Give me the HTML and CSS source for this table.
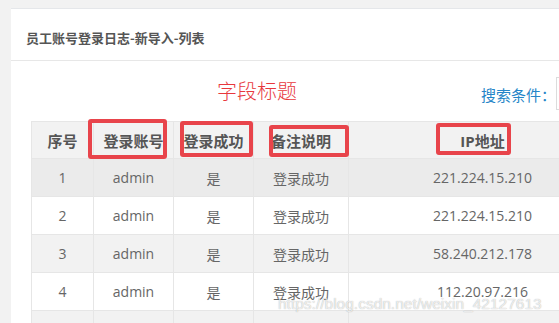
FILE: index.html
```html
<!DOCTYPE html>
<html lang="zh-CN">
<head>
<meta charset="utf-8">
<title>员工账号登录日志-新导入-列表</title>
<link rel="stylesheet" href="styles.css">
</head>
<body>
<div class="page">
  <div class="panel">
    <div class="panel-head">员工账号登录日志-新导入-列表</div>
    <div class="panel-body">
      <div class="toolbar">
        <span class="note">字段标题</span>
        <span class="search-label">搜索条件：</span>
        <span class="search-input"></span>
      </div>
      <table class="grid">
        <colgroup>
          <col class="c1"><col class="c2"><col class="c3"><col class="c4"><col class="c5">
        </colgroup>
        <thead>
          <tr><th>序号</th><th>登录账号</th><th>登录成功</th><th>备注说明</th><th>IP地址</th></tr>
        </thead>
        <tbody>
          <tr class="hover"><td>1</td><td>admin</td><td>是</td><td>登录成功</td><td>221.224.15.210</td></tr>
          <tr><td>2</td><td>admin</td><td>是</td><td>登录成功</td><td>221.224.15.210</td></tr>
          <tr class="odd"><td>3</td><td>admin</td><td>是</td><td>登录成功</td><td>58.240.212.178</td></tr>
          <tr><td>4</td><td>admin</td><td>是</td><td>登录成功</td><td>112.20.97.216</td></tr>
          <tr class="odd"><td>5</td><td>admin</td><td>是</td><td>登录成功</td><td>112.20.97.216</td></tr>
        </tbody>
      </table>
    </div>
  </div>
</div>
<div class="mark m1"></div>
<div class="mark m2"></div>
<div class="mark m3"></div>
<div class="mark m4"></div>
<div class="watermark">https://blog.csdn.net/weixin_42127613</div>
</body>
</html>
```
FILE: styles.css
```css
html, body {
  margin: 0;
  padding: 0;
}
body {
  background: #f2f2f2;
  width: 559px;
  height: 323px;
  overflow: hidden;
  position: relative;
  font-family: "Open Sans", "Noto Sans CJK SC", sans-serif;
}
.page {
  padding: 8px 0 0 11px;
}
.panel {
  background: #fff;
  border-top: 1px solid #e5e7ea;
  width: 760px;
}
.panel-head {
  height: 45px;
  padding: 6px 0 0 15px;
  border-bottom: 1px solid #e7e7e7;
  display: flex;
  align-items: center;
  font-size: 13px;
  font-weight: bold;
  color: #555;
  font-family: "Noto Sans CJK SC", sans-serif;
}
.panel-body {
  padding: 0 0 0 20px;
}
.toolbar {
  display: flex;
  align-items: center;
  height: 33px;
  padding: 16px 0 11px 0;
}
.note {
  margin-left: 186px;
  font-size: 20px;
  color: #e8383d;
  font-family: "Noto Sans CJK SC", sans-serif;
  font-weight: 300;
  position: relative;
  top: -3px;
}
.search-label {
  margin-left: 184px;
  font-size: 15px;
  color: #2585c8;
  font-family: "Noto Sans CJK SC", sans-serif;
  position: relative;
  top: 1px;
}
.search-input {
  margin-left: 0;
  width: 160px;
  height: 31px;
  border: 1px solid #dcdcdc;
  background: #fff;
}
.grid {
  border-collapse: collapse;
  table-layout: fixed;
  width: 585px;
  font-size: 14px;
  color: #666;
}
.c1 { width: 62px; }
.c2 { width: 80px; }
.c3 { width: 80px; }
.c4 { width: 95px; }
.c5 { width: 268px; }
.grid th, .grid td {
  border: 1px solid #e6e6e6;
  text-align: center;
  padding: 0;
}
.grid th {
  height: 36px;
  background: #f2f2f2;
  font-weight: bold;
  font-size: 15px;
  color: #555;
  font-family: "Open Sans", "Noto Sans CJK SC", sans-serif;
}
.grid td {
  height: 37px;
}
.grid tr.hover td {
  background: #ebebeb;
}
.grid tr.odd td {
  background: #f2f2f2;
}
.mark {
  position: absolute;
  border: 4px solid #e8444b;
  border-radius: 3px;
  box-sizing: border-box;
}
.m1 { left: 88px; top: 119px; width: 79px; height: 40px; }
.m2 { left: 180px; top: 121px; width: 73px; height: 36px; }
.m3 { left: 269px; top: 125px; width: 80px; height: 32px; }
.m4 { left: 436px; top: 123px; width: 75px; height: 32px; }
.watermark {
  position: absolute;
  left: 278px;
  top: 295px;
  font-family: "Liberation Sans", sans-serif;
  font-size: 15.5px;
  color: rgba(255, 255, 255, 0.75);
  text-shadow: 0 0 1px rgba(0, 0, 0, 0.35);
  white-space: nowrap;
}
```
